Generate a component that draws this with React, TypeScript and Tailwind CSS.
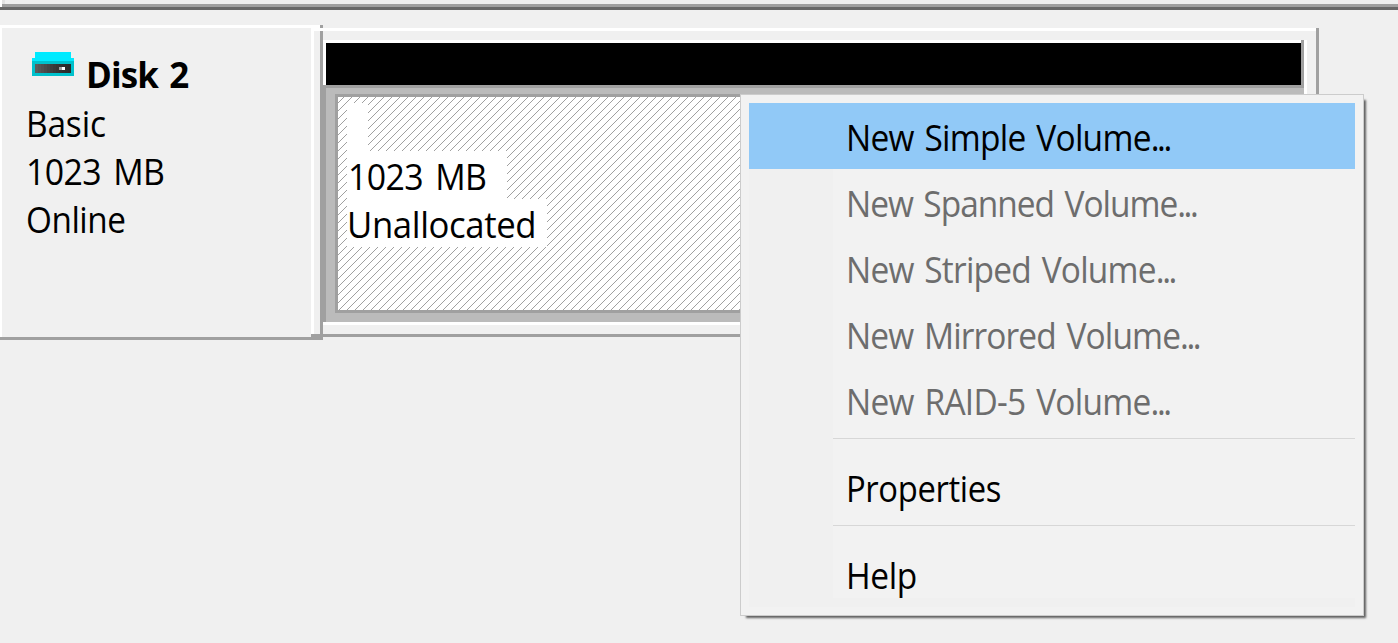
type Item = { label: string; ellipsis?: boolean; state?: 'active' | 'disabled'; fit: string };

const volumeItems: Item[] = [
  { label: 'New Simple Volume', ellipsis: true, state: 'active', fit: 'tracking-[-0.8px] scale-x-[0.93]' },
  { label: 'New Spanned Volume', ellipsis: true, state: 'disabled', fit: 'tracking-[-1.1px] scale-x-[0.93]' },
  { label: 'New Striped Volume', ellipsis: true, state: 'disabled', fit: 'tracking-[-0.85px] scale-x-[0.93]' },
  { label: 'New Mirrored Volume', ellipsis: true, state: 'disabled', fit: 'tracking-[-0.95px] scale-x-[0.93]' },
  { label: 'New RAID-5 Volume', ellipsis: true, state: 'disabled', fit: 'tracking-[-0.8px] scale-x-[0.93]' },
];

function MenuItem({ item }: { item: Item }) {
  const bg = item.state === 'active' ? 'bg-[#91c9f7]' : '';
  const color = item.state === 'disabled' ? 'text-[#6d6d6d]' : 'text-black';
  return (
    <div className={`flex h-[66px] items-center pl-[96.5px] pt-[4px] whitespace-nowrap ${bg} ${color}`}>
      <span className={`inline-block origin-left [word-spacing:3px] ${item.fit}`}>
        {item.label}
        {item.ellipsis && <span className="tracking-[-2.6px]">...</span>}
      </span>
    </div>
  );
}

function Separator() {
  return (
    <div className="h-[21px] pt-[5px] pl-[84px]">
      <div className="h-px bg-[#d7d7d7]" />
    </div>
  );
}

function ContextMenu() {
  return (
    <div className="absolute left-[740px] top-[94px] w-[624px] border border-[#cccccc] bg-[#f2f2f2] p-2 shadow-[4px_4px_2px_-2px_rgba(0,0,0,0.6)]">
      <div className="bg-[linear-gradient(to_right,#f0f0f0_84px,transparent_84px)]">
        {volumeItems.map((item) => (
          <MenuItem key={item.label} item={item} />
        ))}
        <Separator />
        <MenuItem item={{ label: 'Properties', fit: 'tracking-[-0.4px] scale-x-[0.91]' }} />
        <Separator />
        <div className="bg-[linear-gradient(to_top,#f0f0f0_9px,transparent_9px)]">
          <MenuItem item={{ label: 'Help', fit: 'tracking-[-0.4px] scale-x-[0.93]' }} />
        </div>
      </div>
    </div>
  );
}

function DiskIcon() {
  const shades = ['#5c5c5c', '#565656', '#505050', '#4a4a4a', '#444444', '#3e3e3e', '#393939', '#353535', '#313131', '#2e2e2e', '#2c2c2c', '#2a2a2a'];
  return (
    <svg width="42" height="24" viewBox="0 0 42 24" shapeRendering="crispEdges" className="mt-6 shrink-0">
      <rect x="3" y="0" width="36" height="6" fill="#00eaff" />
      <rect x="0" y="6" width="42" height="3" fill="#00eaff" />
      <rect x="0" y="9" width="42" height="15" fill="#00c1cc" />
      {shades.map((c, i) => (
        <rect key={c} x={3 + i * 3} y="12" width="3" height="9" fill={c} />
      ))}
      <rect x="27" y="15" width="3" height="3" fill="#a0a0a0" />
      <rect x="30" y="15" width="3" height="3" fill="#ffffff" />
    </svg>
  );
}

function Hatch() {
  return (
    <svg width="100%" height="100%" shapeRendering="crispEdges" className="col-start-1 row-start-1">
      <defs>
        <pattern id="hatch" width="8" height="8" patternUnits="userSpaceOnUse">
          {[0, 1, 2, 3, 4, 5, 6, 7].map((i) => (
            <rect key={i} x={i} y={(13 - i) % 8} width="1" height="1" fill="#a0a0a0" />
          ))}
        </pattern>
      </defs>
      <rect width="100%" height="100%" fill="url(#hatch)" />
    </svg>
  );
}

function DiskLabel() {
  return (
    <div className="flex h-[315px] w-[311px] flex-col">
      <div className="h-[3px] bg-white" />
      <div className="flex flex-1 flex-col border-l-2 border-white">
        <div className="flex h-[72px] pl-[30px]">
          <DiskIcon />
          <span className="mt-[23px] ml-3 inline-block origin-left scale-x-[0.97] font-bold leading-[48px] tracking-[-0.9px] [word-spacing:3px]">
            Disk 2
          </span>
        </div>
        <div className="flex flex-col items-start pl-6">
          <span className="inline-block origin-left scale-x-[0.93] tracking-[-0.2px]">Basic</span>
          <span className="inline-block origin-left scale-x-[0.94] tracking-[-0.6px] [word-spacing:4px]">1023 MB</span>
          <span className="inline-block origin-left scale-x-[0.925] tracking-[-0.5px]">Online</span>
        </div>
      </div>
      <div className="h-[3px] bg-[#a0a0a0]" />
    </div>
  );
}

function Divider() {
  return (
    <div className="flex h-[315px] w-3 flex-col">
      <div className="flex h-[3px]">
        <div className="w-[9px] bg-white" />
        <div className="w-[3px] bg-[#a0a0a0]" />
      </div>
      <div className="h-[3px] bg-white" />
      <div className="flex flex-1">
        <div className="w-[3px] bg-white" />
        <div className="w-[6px]" />
        <div className="w-[3px] bg-[#a0a0a0]" />
      </div>
      <div className="h-[6px] bg-[#a0a0a0]" />
    </div>
  );
}

function Partition() {
  return (
    <div className="mt-[3px] flex h-[309px] w-[996px] flex-col border-r-[3px] border-[#a0a0a0]">
      <div className="h-[3px] bg-white" />
      <div className="flex-1 pt-[9px] pr-[9px] pb-[9px]">
        <div className="flex h-full flex-col bg-white pb-[3px] pr-[3px]">
          <div className="flex h-[45px]">
            <div className="mt-[3px] ml-[3px] flex-1 bg-black" />
            <div className="w-[3px] bg-[#a0a0a0]" />
          </div>
          <div className="h-[3px] bg-[#a0a0a0]" />
          <div className="flex-1 border-l-[3px] border-[#a0a0a0] bg-[#bbbbbb] px-[9px] pt-[6px] pb-[9px]">
            <div className="grid h-full border-[3px] border-[#a0a0a0] bg-white">
              <Hatch />
              <div className="col-start-1 row-start-1 flex flex-col items-start pl-[9px] pt-[6px]">
                <div className="h-12 w-[21px] bg-white" />
                <div className="h-12 w-[160px] bg-white pt-[2px] pl-px">
                  <span className="inline-block origin-left scale-x-[0.94] tracking-[-0.6px] [word-spacing:4px]">1023 MB</span>
                </div>
                <div className="h-12 w-[200px] bg-white pt-[2px]">
                  <span className="inline-block origin-left scale-x-[0.965] tracking-[-0.4px]">Unallocated</span>
                </div>
              </div>
            </div>
          </div>
        </div>
      </div>
      <div className="h-[3px] bg-[#a0a0a0]" />
    </div>
  );
}

export default function App() {
  return (
    <div className="relative h-[643px] w-[1398px] overflow-hidden bg-[#f0f0f0] font-['Open_Sans','Noto_Sans',sans-serif] text-[36px] leading-[48px] text-black">
      <div className="flex h-[7px]">
        <div className="w-[2px] bg-white" />
        <div className="flex flex-1 flex-col">
          <div className="h-1 w-[3px] bg-[#e3e3e3]" />
          <div className="h-[3px] bg-[#a0a0a0]" />
        </div>
      </div>
      <div className="h-[3px] bg-[#696969]" />
      <div className="mt-[15px] flex">
        <DiskLabel />
        <Divider />
        <Partition />
      </div>
      <ContextMenu />
    </div>
  );
}
